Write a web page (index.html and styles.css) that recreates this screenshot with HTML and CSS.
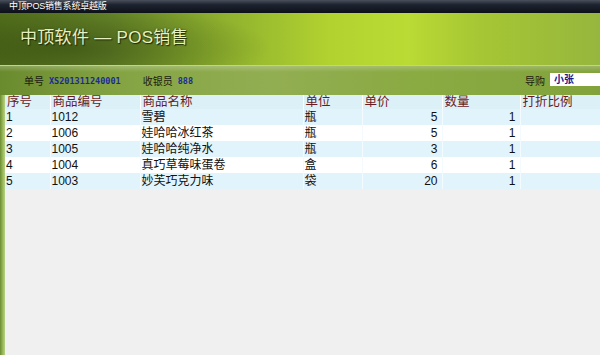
FILE: index.html
```html
<!DOCTYPE html>
<html lang="zh">
<head>
<meta charset="utf-8">
<link rel="stylesheet" href="styles.css">
</head>
<body>
<div class="window">
  <div class="titlebar">中顶POS销售系统卓越版</div>
  <div class="banner">
    <h1 class="brand">中顶软件 — POS销售</h1>
  </div>
  <div class="infobar">
    <span class="label">单号</span><span class="value mono">XS201311240001</span>
    <span class="label gap">收银员</span><span class="value mono">888</span>
    <span class="spacer"></span>
    <span class="label">导购</span><span class="inputbox">小张</span>
  </div>
  <div class="content">
    <div class="leftstrip"></div>
    <div class="tablewrap">
      <table class="grid">
        <colgroup>
          <col class="c1"><col class="c2"><col class="c3"><col class="c4"><col class="c5"><col class="c6"><col class="c7">
        </colgroup>
        <thead>
          <tr><th>序号</th><th>商品编号</th><th>商品名称</th><th>单位</th><th>单价</th><th>数量</th><th>打折比例</th></tr>
        </thead>
        <tbody>
          <tr><td>1</td><td>1012</td><td>雪碧</td><td>瓶</td><td class="num">5</td><td class="num">1</td><td></td></tr>
          <tr><td>2</td><td>1006</td><td>娃哈哈冰红茶</td><td>瓶</td><td class="num">5</td><td class="num">1</td><td></td></tr>
          <tr><td>3</td><td>1005</td><td>娃哈哈纯净水</td><td>瓶</td><td class="num">3</td><td class="num">1</td><td></td></tr>
          <tr><td>4</td><td>1004</td><td>真巧草莓味蛋卷</td><td>盒</td><td class="num">6</td><td class="num">1</td><td></td></tr>
          <tr><td>5</td><td>1003</td><td>妙芙巧克力味</td><td>袋</td><td class="num">20</td><td class="num">1</td><td></td></tr>
        </tbody>
      </table>
      <div class="empty"></div>
    </div>
  </div>
</div>
</body>
</html>
```
FILE: styles.css
```css
html, body {
  margin: 0;
  padding: 0;
  width: 600px;
  height: 355px;
  overflow: hidden;
  font-family: "Liberation Sans", "Noto Sans CJK SC", sans-serif;
}
.window {
  display: flex;
  flex-direction: column;
  width: 600px;
  height: 355px;
}
.titlebar {
  height: 13px;
  flex: none;
  background: linear-gradient(to bottom, #4a505c 0%, #1e2430 35%, #0c1018 100%);
  color: #ffffff;
  font-size: 9px;
  line-height: 12px;
  padding-left: 9px;
  letter-spacing: -0.2px;
}
.banner {
  height: 53px;
  flex: none;
  display: flex;
  align-items: center;
  background:
    radial-gradient(ellipse 200px 45px at 70px 35px, rgba(40,60,10,0.5), rgba(40,60,10,0) 100%),
    linear-gradient(to right, #54711c 0%, #68872a 18%, #90b22e 38%, #b2d230 55%, #bada34 68%, #a6c634 80%, #96b63e 100%);
  box-shadow: inset 0 -1px 0 #c0d878;
}
.brand {
  margin: 0 0 0 20px;
  font-size: 17px;
  font-weight: normal;
  color: #e6f0c0;
  text-shadow: 1px 1px 1px #1e2a08, 0 0 2px #33440f;
  letter-spacing: 0.3px;
  line-height: 20px;
  padding-bottom: 4px;
}
.infobar {
  height: 29px;
  flex: none;
  display: flex;
  align-items: center;
  padding-left: 24px;
  background:
    linear-gradient(to bottom, rgba(255,255,255,0.22) 0px, rgba(255,255,255,0) 6px),
    linear-gradient(to right, #6a8a2e 0%, #84a444 20%, #92ae52 45%, #8aaa42 70%, #82a23c 100%);
  font-size: 10px;
  color: #1a2010;
}
.label { margin-right: 5px; }
.label.gap { margin-left: 22px; }
.value.mono {
  font-family: "DejaVu Sans Mono", "Liberation Mono", monospace;
  font-size: 8.5px;
  font-weight: bold;
  color: #1a2a9c;
}
.spacer { flex: 1; }
.inputbox {
  width: 46px;
  height: 13px;
  background: #ffffff;
  color: #1a1a8c;
  font-weight: bold;
  font-size: 10px;
  line-height: 13px;
  padding-left: 4px;
  margin-top: -2px;
}
.content {
  flex: 1;
  display: flex;
  min-height: 0;
}
.leftstrip {
  width: 5px;
  flex: none;
  background: linear-gradient(to right, #6d8c32, #9cbc5e 60%, #b8d088);
}
.tablewrap {
  flex: 1;
  display: flex;
  flex-direction: column;
  background: #f0f0f0;
}
.grid {
  border-collapse: collapse;
  table-layout: fixed;
  width: 595px;
  font-size: 12px;
}
.c1 { width: 45px; }
.c2 { width: 90px; }
.c3 { width: 163px; }
.c4 { width: 59px; }
.c5 { width: 80px; }
.c6 { width: 78px; }
.c7 { width: 80px; }
.grid th {
  height: 14px;
  padding: 0 0 0 2px;
  text-align: left;
  font-weight: normal;
  font-size: 12.5px;
  line-height: 14px;
  color: #6a1a22;
  background: #dcf0f8;
  border-right: 1px solid #ffffff;
  white-space: nowrap;
}
.grid td {
  height: 16px;
  padding: 0 0 0 1px;
  line-height: 16px;
  color: #111111;
  border-right: 1px solid #f4fbfe;
  white-space: nowrap;
}
.grid td.num { text-align: right; padding-right: 4px; }
.grid tbody tr:nth-child(odd) td { background: #e2f4fb; }
.grid tbody tr:nth-child(even) td { background: #ffffff; }
.empty { flex: 1; background: #f0f0f0; }
```
